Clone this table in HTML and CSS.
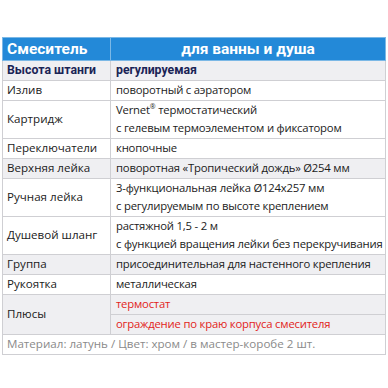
FILE: index.html
```html
<!DOCTYPE html>
<html lang="ru">
<head>
<meta charset="utf-8">
<link rel="stylesheet" href="styles.css">
</head>
<body>
<table class="spec">
  <colgroup>
    <col class="c1">
    <col class="c2">
  </colgroup>
  <tr class="head">
    <th class="k">Смеситель</th>
    <th class="v">для ванны и душа</th>
  </tr>
  <tr class="gray strong">
    <td class="k">Высота штанги</td>
    <td class="v">регулируемая</td>
  </tr>
  <tr>
    <td class="k">Излив</td>
    <td class="v">поворотный с аэратором</td>
  </tr>
  <tr>
    <td class="k">Картридж</td>
    <td class="v">Vernet<sup>®</sup> термостатический<br>с гелевым термоэлементом и фиксатором</td>
  </tr>
  <tr>
    <td class="k">Переключатели</td>
    <td class="v">кнопочные</td>
  </tr>
  <tr class="gray">
    <td class="k">Верхняя лейка</td>
    <td class="v">поворотная «Тропический дождь» Ø254 мм</td>
  </tr>
  <tr>
    <td class="k">Ручная лейка</td>
    <td class="v">3-функциональная лейка Ø124x257 мм<br>с регулируемым по высоте креплением</td>
  </tr>
  <tr>
    <td class="k">Душевой шланг</td>
    <td class="v">растяжной 1,5 - 2 м<br>с функцией вращения лейки без перекручивания</td>
  </tr>
  <tr class="gray">
    <td class="k">Группа</td>
    <td class="v">присоединительная для настенного крепления</td>
  </tr>
  <tr>
    <td class="k">Рукоятка</td>
    <td class="v">металлическая</td>
  </tr>
  <tr class="gray">
    <td class="k" rowspan="2">Плюсы</td>
    <td class="v red">термостат</td>
  </tr>
  <tr class="gray">
    <td class="v red">ограждение по краю корпуса смесителя</td>
  </tr>
  <tr>
    <td class="note" colspan="2">Материал: латунь / Цвет: хром / в мастер-коробе 2 шт.</td>
  </tr>
</table>
</body>
</html>
```

FILE: styles.css
```css
html, body {
  margin: 0;
  padding: 0;
  background: #ffffff;
}
body {
  padding: 37px 2px 0 2px;
  font-family: "Open Sans", "Noto Sans", sans-serif;
  color: #1b1b1b;
}
.spec {
  width: 384px;
  table-layout: fixed;
  border-collapse: collapse;
  font-size: 11.6px;
  line-height: 18px;
}
.c1 {
  width: 108px;
}
.spec td, .spec th {
  border: 1px solid #cfcfd3;
  padding: 0 2px 1px 4px;
  text-align: left;
  vertical-align: middle;
  font-weight: normal;
  white-space: nowrap;
  overflow: hidden;
}
.spec td.v {
  padding-left: 5px;
  font-size: 11.3px;
  letter-spacing: -0.2px;
}
.head th {
  font-family: Roboto, "Open Sans", sans-serif;
  background: #2389d8;
  color: #ffffff;
  font-weight: bold;
  font-size: 15.5px;
  line-height: 22px;
  padding: 0 4px;
  border-color: #7bb8e6;
  letter-spacing: 0;
}
.head .v {
  text-align: center;
}
.gray td {
  background: #efeff2;
}
.strong td {
  font-family: Roboto, "Open Sans", sans-serif;
  font-weight: 700;
  font-size: 12.3px;
  color: #1a2456;
}
.spec .strong td.v {
  font-size: 12.3px;
  letter-spacing: 0;
}
.spec .red {
  color: #e2231a;
}
.spec sup {
  font-size: 7px;
  line-height: 0;
  vertical-align: 5px;
}
.spec .note {
  color: #8a8a8a;
  background: #ffffff;
}
```
